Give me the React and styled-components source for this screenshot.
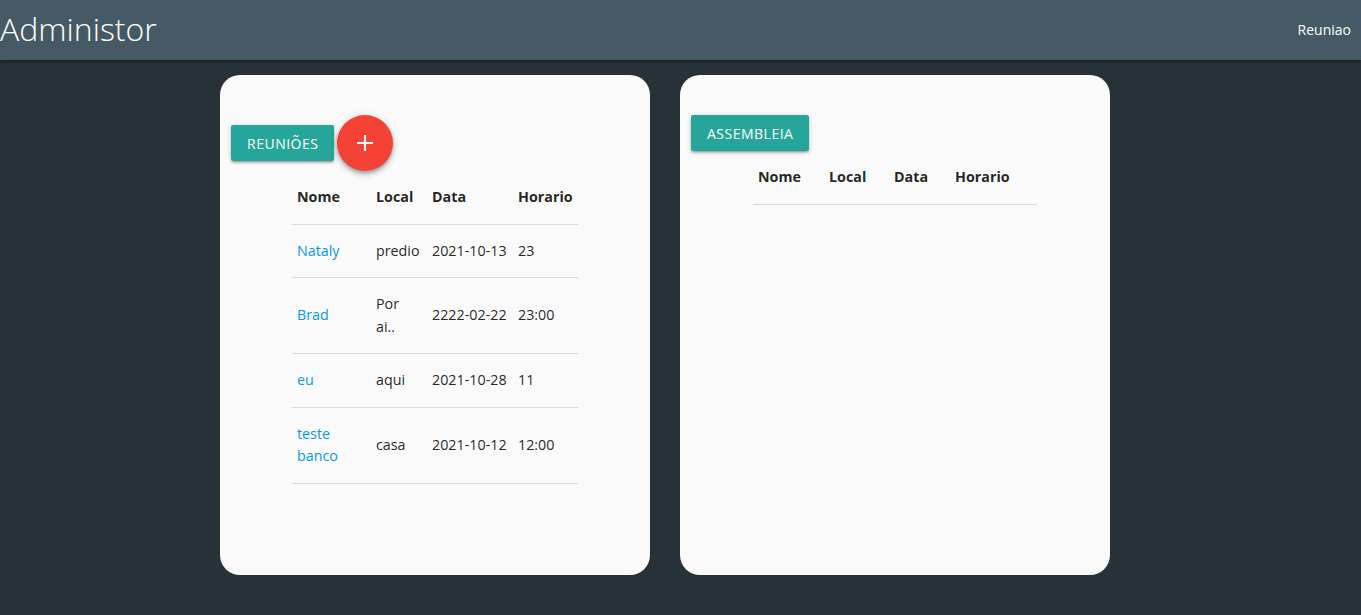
import React from "react";
import styled, { createGlobalStyle } from "styled-components";

const Global = createGlobalStyle`
  html, body { margin: 0; padding: 0; }
  body {
    background: #263238;
    font-family: "Open Sans", "Noto Sans", sans-serif;
    color: rgba(0, 0, 0, 0.87);
    min-height: 615px;
  }
`;

const Nav = styled.nav`
  height: 60px;
  background: #455a64;
  display: flex;
  align-items: center;
  justify-content: space-between;
  box-shadow: 0 2px 2px 0 rgba(0,0,0,0.14), 0 3px 1px -2px rgba(0,0,0,0.12), 0 1px 5px 0 rgba(0,0,0,0.2);
  position: relative;
  z-index: 1;
`;

const Brand = styled.a`
  color: #fff;
  font-size: 32px;
  font-weight: 300;
  letter-spacing: 0;
  line-height: 60px;
  margin-top: -3px;
`;

const NavLink = styled.a`
  color: #fff;
  font-size: 14px;
  padding: 0 10px 0 15px;
  margin-top: -2px;
`;

const Main = styled.main`
  display: flex;
  gap: 30px;
  padding: 15px 0 0 220px;
`;

const Card = styled.section`
  width: 430px;
  height: 500px;
  background: #fafafa;
  border-radius: 20px;
  padding-top: 40px;
  box-sizing: border-box;
`;

const Actions = styled.div`
  display: flex;
  align-items: center;
  gap: 3px;
  padding-left: 11px;
`;

const Btn = styled.button`
  height: 36px;
  padding: 0 16px;
  border: none;
  border-radius: 2px;
  background: #26a69a;
  color: #fff;
  font-family: inherit;
  font-size: 14px;
  letter-spacing: 0.5px;
  text-transform: uppercase;
  box-shadow: 0 2px 2px 0 rgba(0,0,0,0.14), 0 3px 1px -2px rgba(0,0,0,0.12), 0 1px 5px 0 rgba(0,0,0,0.2);
`;

const Fab = styled.button`
  width: 56px;
  height: 56px;
  border-radius: 50%;
  border: none;
  background: #f44336;
  display: flex;
  align-items: center;
  justify-content: center;
  box-shadow: 0 4px 5px 0 rgba(0,0,0,0.14), 0 1px 10px 0 rgba(0,0,0,0.12), 0 2px 4px -1px rgba(0,0,0,0.3);
`;

const Table = styled.table`
  margin: 0 auto;
  border-collapse: collapse;
  font-size: 14.3px;
`;

const Th = styled.th`
  text-align: left;
  font-weight: 700;
  padding: 15px 5px;
  line-height: 22.5px;
  width: ${(p) => p.$w}px;
  box-sizing: border-box;
`;

const Row = styled.tr`
  border-bottom: 1px solid rgba(0, 0, 0, 0.12);
`;

const Td = styled.td`
  padding: 15px 5px;
  line-height: 22.5px;
  vertical-align: middle;
`;

const Name = styled.a`
  color: #039be5;
`;

const Plus = () => (
  <svg width="20" height="20" viewBox="0 0 20 20">
    <path d="M10 2v16M2 10h16" stroke="#fff" strokeWidth="2.2" />
  </svg>
);

const meetings = [
  { nome: "Nataly", local: "predio", data: "2021-10-13", hora: "23" },
  { nome: "Brad", local: ["Por", "ai.."], data: "2222-02-22", hora: "23:00" },
  { nome: "eu", local: "aqui", data: "2021-10-28", hora: "11" },
  { nome: ["teste", "banco"], local: "casa", data: "2021-10-12", hora: "12:00" },
];

const lines = (v) =>
  Array.isArray(v) ? v.map((s, i) => <div key={i}>{s}</div>) : v;

const Head = ({ widths }) => (
  <thead>
    <Row>
      {["Nome", "Local", "Data", "Horario"].map((h, i) => (
        <Th key={h} $w={widths[i]}>{h}</Th>
      ))}
    </Row>
  </thead>
);

export default function App() {
  return (
    <>
      <Global />
      <Nav>
        <Brand>Administor</Brand>
        <NavLink>Reuniao</NavLink>
      </Nav>
      <Main>
        <Card>
          <Actions>
            <Btn>Reuniões</Btn>
            <Fab><Plus /></Fab>
          </Actions>
          <Table>
            <Head widths={[79, 56, 86, 65]} />
            <tbody>
              {meetings.map((m, i) => (
                <Row key={i}>
                  <Td><Name>{lines(m.nome)}</Name></Td>
                  <Td>{lines(m.local)}</Td>
                  <Td>{m.data}</Td>
                  <Td>{m.hora}</Td>
                </Row>
              ))}
            </tbody>
          </Table>
        </Card>
        <Card>
          <Actions>
            <Btn>Assembleia</Btn>
          </Actions>
          <Table>
            <Head widths={[71, 65, 61, 87]} />
          </Table>
        </Card>
      </Main>
    </>
  );
}
